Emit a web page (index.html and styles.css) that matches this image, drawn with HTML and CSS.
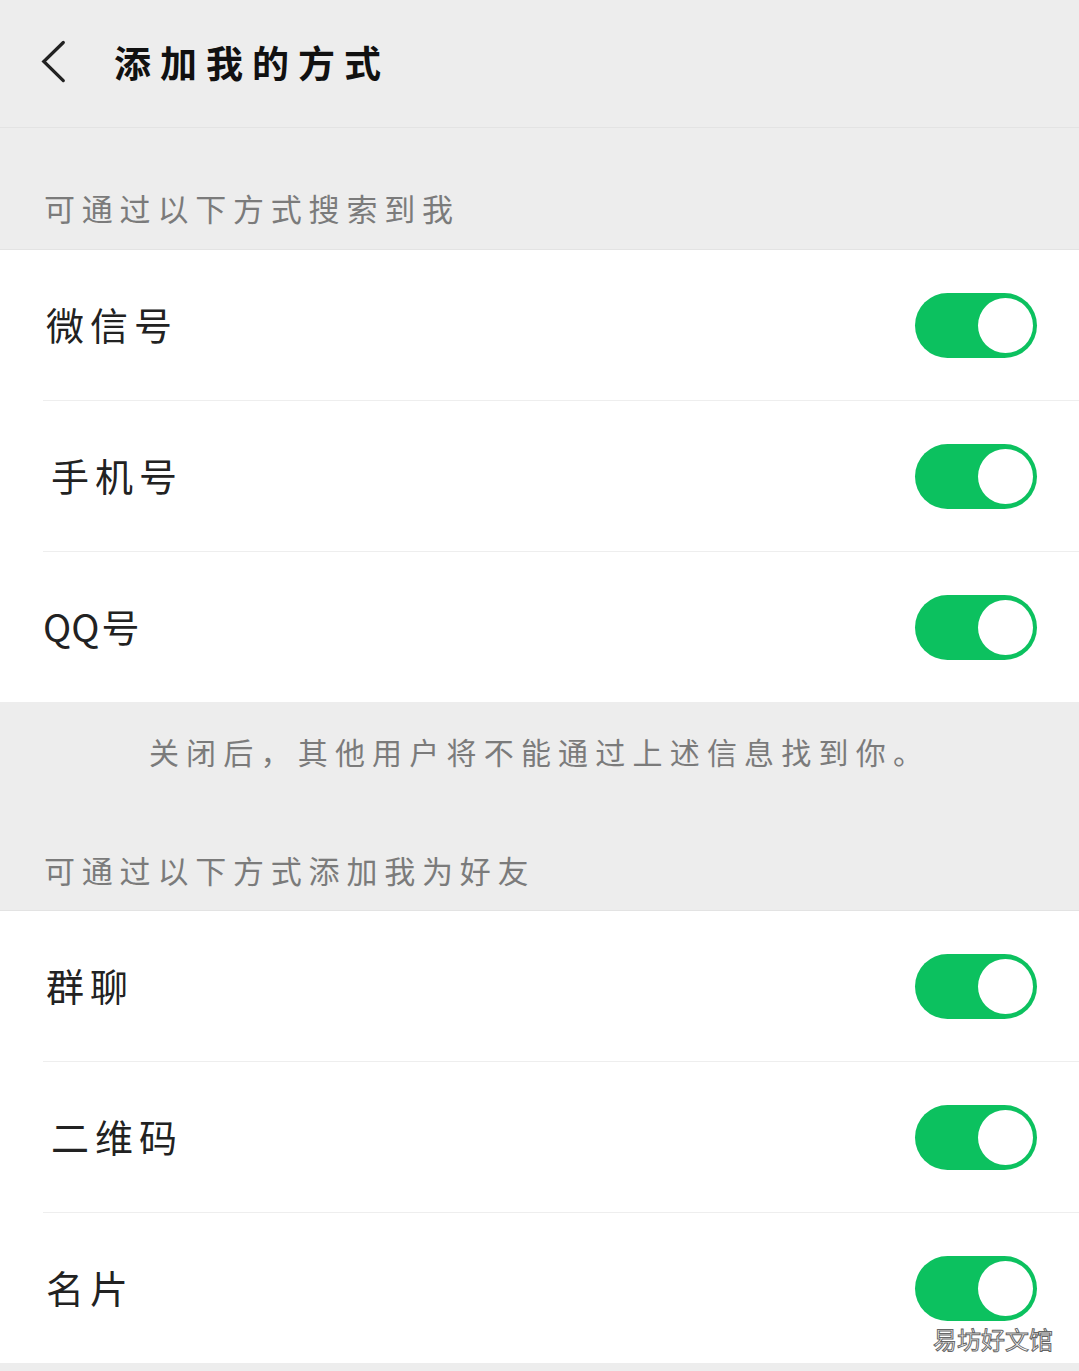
FILE: index.html
```html
<!DOCTYPE html>
<html lang="zh-CN">
<head>
  <meta charset="UTF-8" />
  <meta name="viewport" content="width=device-width, initial-scale=1.0" />
  <title>添加我的方式</title>
  <link rel="stylesheet" href="styles.css">
</head>
<body>
  <header class="top-bar">
    <svg class="back-icon" xmlns="http://www.w3.org/2000/svg" viewBox="0 0 28 48">
      <path d="M24 3 L3 23.5 L24 44" />
    </svg>
    <h1>添加我的方式</h1>
  </header>

  <div class="section-title">可通过以下方式搜索到我</div>
  <div class="list">
    <div class="row"><span>微信号</span><div class="toggle"><i></i></div></div>
    <div class="row"><span class="indent">手机号</span><div class="toggle"><i></i></div></div>
    <div class="row"><span class="qq"><b>QQ</b>号</span><div class="toggle"><i></i></div></div>
  </div>
  <p class="note">关闭后，其他用户将不能通过上述信息找到你。</p>

  <div class="section-title second">可通过以下方式添加我为好友</div>
  <div class="list">
    <div class="row"><span>群聊</span><div class="toggle"><i></i></div></div>
    <div class="row"><span class="indent">二维码</span><div class="toggle"><i></i></div></div>
    <div class="row"><span>名片</span><div class="toggle"><i></i></div></div>
  </div>

  <div class="watermark">易坊好文馆</div>
</body>
</html>
```

FILE: styles.css
```css
html, body {
  margin: 0;
  padding: 0;
}
body {
  position: relative;
  height: 1371px;
  overflow: hidden;
  background: #ededed;
  font-family: "Noto Sans CJK SC", "Noto Sans", sans-serif;
  color: #1c1c1c;
}
.top-bar {
  display: flex;
  align-items: center;
  height: 123px;
  padding: 0 0 4px 41px;
  border-bottom: 1px solid #e3e3e3;
}
.back-icon {
  width: 26px;
  height: 46px;
  margin-right: 47px;
  fill: none;
  stroke: #222;
  stroke-width: 3.5;
  stroke-linecap: round;
}
h1 {
  margin: 0;
  font-size: 37px;
  font-weight: 700;
  line-height: 46px;
  letter-spacing: 9px;
  color: #111;
}
.section-title {
  display: flex;
  align-items: flex-end;
  height: 103px;
  padding: 0 0 18px 44px;
  font-size: 31px;
  line-height: 46px;
  letter-spacing: 6.8px;
  color: #7b7b7b;
  border-bottom: 1px solid #e3e3e3;
}
.section-title.second {
  height: 97px;
  padding-bottom: 17px;
}
.list {
  background: #fff;
  padding-left: 43px;
}
.row {
  display: flex;
  align-items: center;
  justify-content: space-between;
  height: 150px;
  padding-right: 42px;
  border-bottom: 1px solid #eeeeee;
  font-size: 38px;
  letter-spacing: 6px;
  color: #222;
}
.row:last-child {
  border-bottom: none;
}
.row span {
  margin: 0 0 4px 3px;
}
.row .indent {
  margin-left: 8px;
}
.row .qq {
  margin-left: 0;
}
.qq b {
  font-weight: 400;
  letter-spacing: 0;
  margin-right: 2px;
}
.toggle {
  display: flex;
  align-items: center;
  justify-content: flex-end;
  width: 122px;
  height: 65px;
  padding-right: 4px;
  box-sizing: border-box;
  border-radius: 33px;
  background: #0cc15f;
}
.toggle i {
  display: block;
  width: 55px;
  height: 55px;
  border-radius: 50%;
  background: #fff;
}
.note {
  margin: 0;
  padding-top: 26px;
  height: 68px;
  font-size: 30px;
  line-height: 46px;
  letter-spacing: 7.2px;
  text-align: center;
  color: #7b7b7b;
}
.watermark {
  position: absolute;
  left: 933px;
  top: 1322px;
  font-size: 24px;
  line-height: 34px;
  color: #fff;
  -webkit-text-stroke: 1px #666;
}
```
